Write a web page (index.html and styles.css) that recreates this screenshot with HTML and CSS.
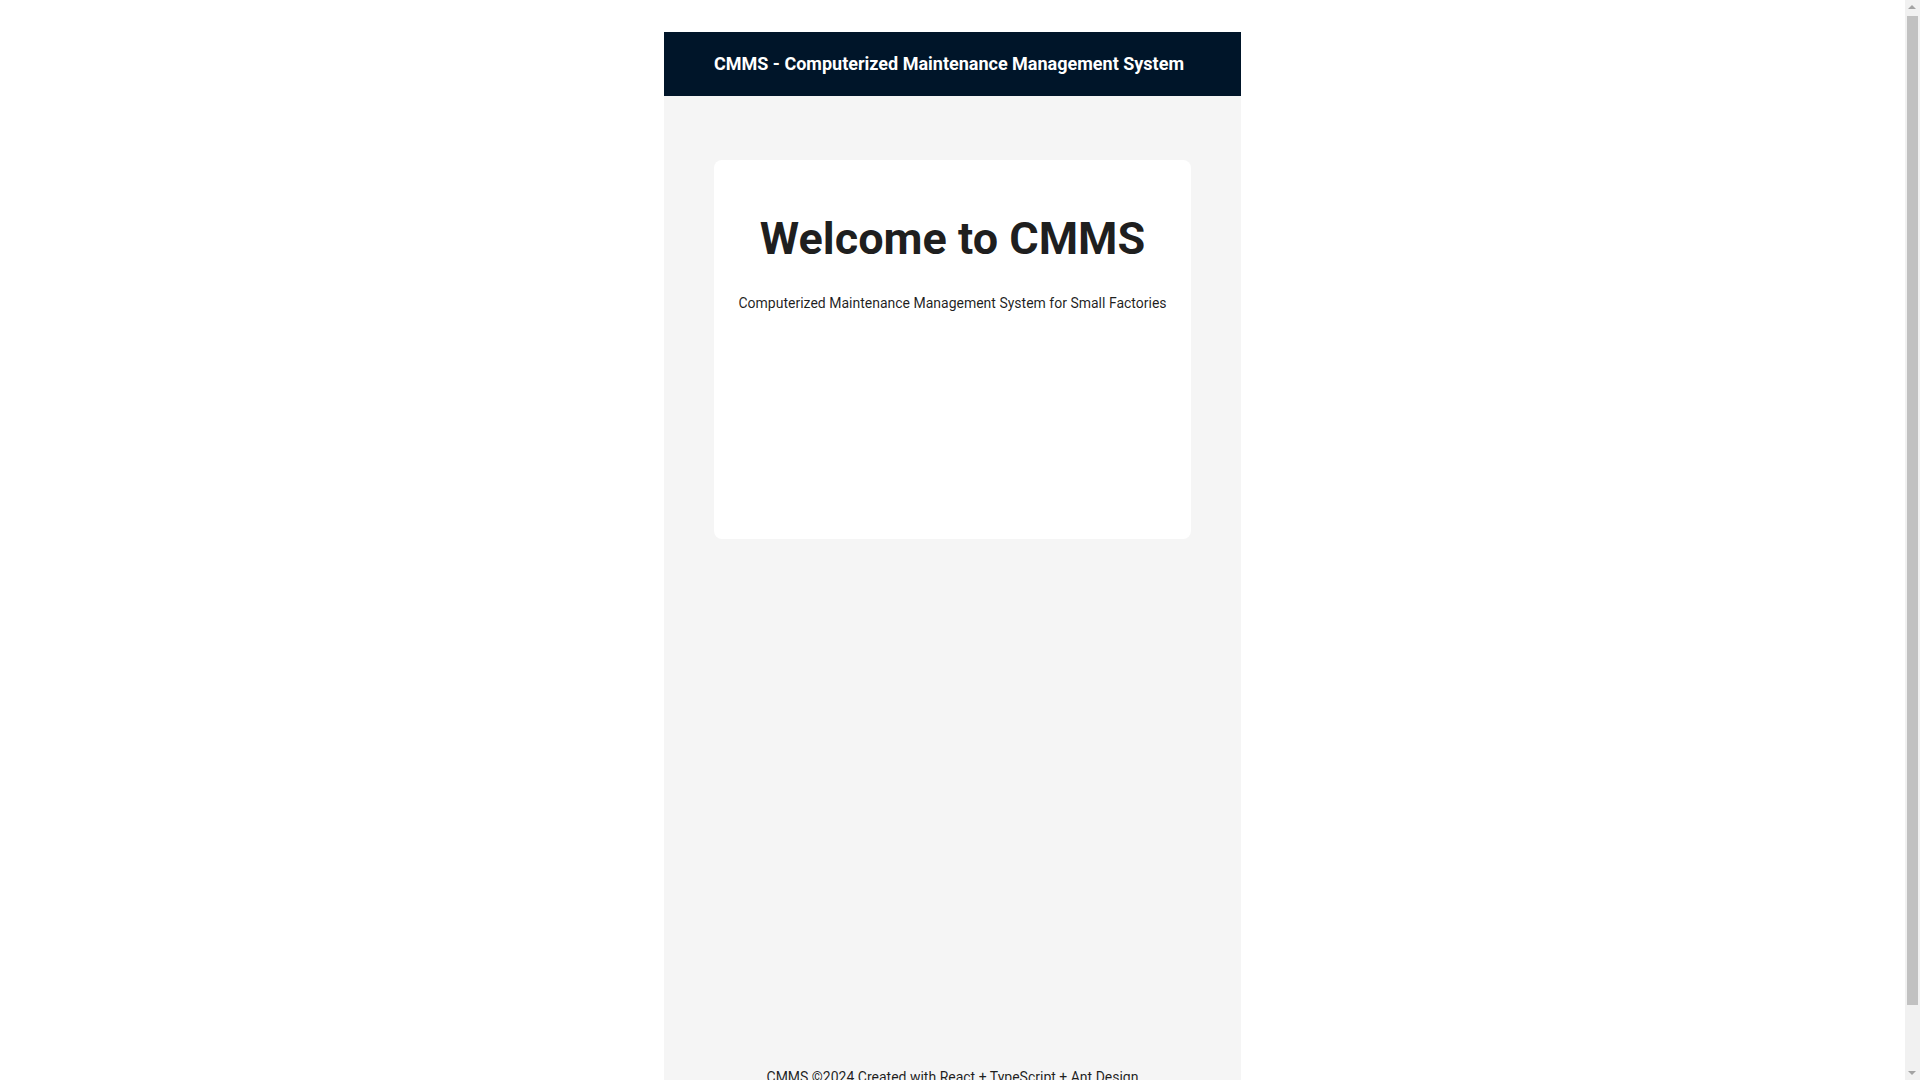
FILE: index.html
```html
<!DOCTYPE html>
<html lang="en">
<head>
<meta charset="UTF-8">
<title>CMMS</title>
<link rel="stylesheet" href="styles.css">
</head>
<body>
<div class="root">
  <div class="layout">
    <header class="header">CMMS - Computerized Maintenance Management System</header>
    <main class="content">
      <div class="card">
        <h1 class="title">Welcome to CMMS</h1>
        <p class="subtitle">Computerized Maintenance Management System for Small Factories</p>
      </div>
    </main>
    <footer class="footer">CMMS ©2024 Created with React + TypeScript + Ant Design</footer>
  </div>
</div>
<div class="scrollbar" aria-hidden="true">
  <span class="sb-arrow sb-up"></span>
  <span class="sb-thumb"></span>
  <span class="sb-arrow sb-down"></span>
</div>
</body>
</html>
```

FILE: styles.css
```css
html, body {
  margin: 0;
  padding: 0;
}
body {
  background: #ffffff;
  font-family: Roboto, "Liberation Sans", Arial, sans-serif;
  color: rgba(0, 0, 0, 0.88);
  min-height: 100vh;
  padding-right: 15px;
}
.root {
  width: 577px;
  margin: 0 auto;
  padding: 32px 0;
  text-align: center;
}
.layout {
  min-height: 100vh;
  display: flex;
  flex-direction: column;
  background: #f5f5f5;
}
.header {
  height: 64px;
  padding: 0 50px;
  background: #001529;
  color: #ffffff;
  font-size: 18px;
  font-weight: 700;
  line-height: 64px;
  text-align: left;
  white-space: nowrap;
}
.content {
  flex: 1;
  padding: 64px 50px 0;
}
.card {
  background: #ffffff;
  border-radius: 8px;
  padding: 24px;
  height: 379px;
  box-sizing: border-box;
}
.title {
  margin: 28px 0 26px;
  font-size: 45px;
  line-height: 1.2;
  font-weight: 700;
  color: rgba(0, 0, 0, 0.88);
}
.subtitle {
  margin: 0;
  font-size: 14px;
  line-height: 22px;
  color: rgba(0, 0, 0, 0.88);
  white-space: nowrap;
}
.footer {
  padding: 24px 50px;
  font-size: 14px;
  line-height: 22px;
  text-align: center;
  color: rgba(0, 0, 0, 0.88);
}
.scrollbar {
  position: fixed;
  top: 0;
  right: 0;
  width: 15px;
  height: 100vh;
  background: #f1f1f1;
  display: flex;
  flex-direction: column;
  align-items: center;
}
.sb-arrow {
  flex: none;
  width: 15px;
  height: 15px;
  position: relative;
}
.sb-arrow::after {
  content: "";
  position: absolute;
  left: 3px;
  width: 0;
  height: 0;
  border-left: 4px solid transparent;
  border-right: 4px solid transparent;
}
.sb-up::after {
  top: 5px;
  border-bottom: 4px solid #a3a3a3;
}
.sb-down {
  margin-top: auto;
}
.sb-down::after {
  top: 6px;
  border-top: 4px solid #a3a3a3;
}
.sb-thumb {
  flex: none;
  width: 11px;
  height: 989px;
  margin-top: 1px;
  background: #c1c1c1;
}
```
